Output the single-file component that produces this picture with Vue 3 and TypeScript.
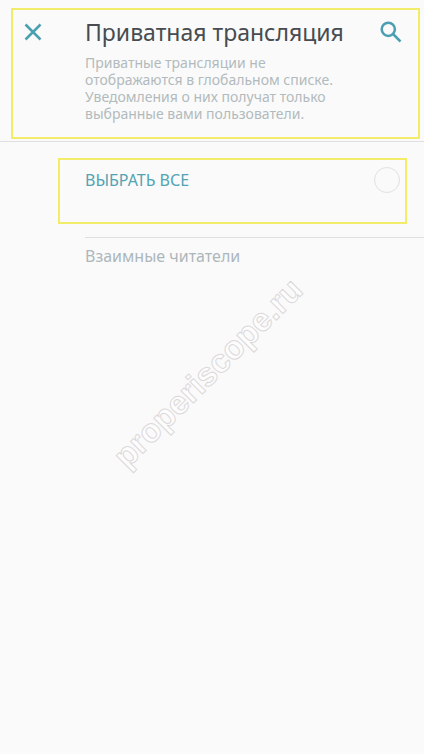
<script setup lang="ts">
import { ref } from 'vue'

const allSelected = ref<boolean>(false)
</script>

<template>
  <main class="screen">
    <header class="top">
      <div class="frame top-frame">
        <button class="icon-button close" type="button" aria-label="Закрыть">
          <svg width="18" height="18" viewBox="0 0 18 18" aria-hidden="true">
            <path d="M1.5 1.5 16.5 16.5M16.5 1.5 1.5 16.5" />
          </svg>
        </button>
        <div class="heading">
          <h1>Приватная трансляция</h1>
          <p>Приватные трансляции не отображаются в глобальном списке. Уведомления о них получат только выбранные вами пользователи.</p>
        </div>
        <button class="icon-button search" type="button" aria-label="Поиск">
          <svg width="22" height="22" viewBox="0 0 22 22" aria-hidden="true">
            <circle cx="8.3" cy="8.3" r="6.6" />
            <path d="M13 13 20.5 20.5" />
          </svg>
        </button>
      </div>
    </header>

    <section class="choice">
      <div class="frame choice-frame">
        <label for="select-all">ВЫБРАТЬ ВСЕ</label>
        <input id="select-all" v-model="allSelected" type="checkbox" />
      </div>
    </section>

    <section class="readers">
      <h2>Взаимные читатели</h2>
    </section>

    <div class="watermark">properiscope.ru</div>
  </main>
</template>

<style>
body {
  background: #fafafa;
}
</style>

<style scoped>
.screen {
  position: relative;
  min-height: 100vh;
  overflow: hidden;
  background: #fafafa;
  font-family: "Noto Sans", "Open Sans", sans-serif;
}

.frame {
  box-sizing: border-box;
  display: flex;
  align-items: flex-start;
  border: 2px solid #f3ec68;
}

.top {
  padding: 8px 4px 2px 11px;
  border-bottom: 1px solid #dedfe0;
}

.top-frame {
  padding: 6px 16px 15px 11px;
}

.icon-button {
  display: flex;
  flex: none;
  padding: 0;
  border: 0;
  background: none;
  cursor: pointer;
}

.icon-button svg {
  fill: none;
  stroke: #4b9fb2;
  stroke-width: 2.5;
}

.close {
  margin-top: 7px;
}

.search {
  margin-top: 5px;
}

.heading {
  flex: 1;
  min-width: 0;
  padding-left: 43px;
}

h1 {
  margin: 0;
  color: #484c50;
  font-size: 23px;
  font-weight: 400;
  line-height: 32px;
  white-space: nowrap;
}

p {
  max-width: 256px;
  margin: 6px 0 0;
  color: #b2babd;
  font-size: 14px;
  line-height: 17px;
}

.choice {
  padding: 16px 17px 13px 58px;
}

.choice-frame {
  justify-content: space-between;
  padding: 7px 5px 29px 25px;
}

label {
  color: #52a3b3;
  font-size: 16px;
  line-height: 26px;
}

input {
  flex: none;
  appearance: none;
  width: 26px;
  height: 26px;
  margin: 0;
  border: 1px solid #dfe1e2;
  border-radius: 50%;
}

input:checked {
  background: #4b9fb2;
}

.readers {
  margin-left: 85px;
  border-top: 1px solid #dedfe0;
}

h2 {
  margin: 6px 0 0;
  color: #adb7bb;
  font-size: 16px;
  font-weight: 400;
  line-height: 24px;
}

.watermark {
  position: absolute;
  top: 373px;
  left: 49%;
  color: #fdfdfd;
  font-family: "Liberation Sans", Arial, sans-serif;
  font-size: 33px;
  font-weight: 700;
  line-height: 40px;
  white-space: nowrap;
  pointer-events: none;
  transform: translate(-50%, -50%) rotate(-45deg);
  -webkit-text-stroke: 1px #dcd9da;
}
</style>
